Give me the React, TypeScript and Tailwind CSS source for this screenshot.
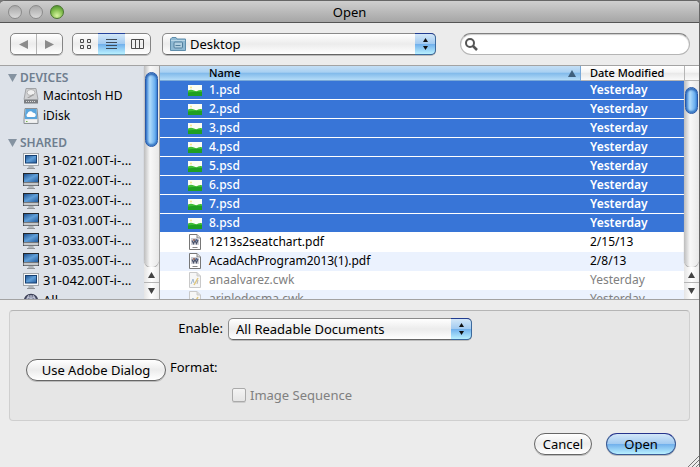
import React from "react";

const files = [
  ...["1", "2", "3", "4", "5", "6", "7", "8"].map((n) => ({
    name: `${n}.psd`,
    date: "Yesterday",
    kind: "psd",
  })),
  { name: "1213s2seatchart.pdf", date: "2/15/13", kind: "pdf" },
  { name: "AcadAchProgram2013(1).pdf", date: "2/8/13", kind: "pdf" },
  { name: "anaalvarez.cwk", date: "Yesterday", kind: "cwk" },
  { name: "arinledesma.cwk", date: "Yesterday", kind: "cwk" },
];

const shared = [
  { name: "31-021.00T-i-...", dark: false },
  { name: "31-022.00T-i-...", dark: true },
  { name: "31-023.00T-i-...", dark: true },
  { name: "31-031.00T-i-...", dark: true },
  { name: "31-033.00T-i-...", dark: true },
  { name: "31-035.00T-i-...", dark: true },
  { name: "31-042.00T-i-...", dark: false },
];

function PictureIcon() {
  return (
    <svg width="14" height="11" viewBox="0 0 14 11" className="block">
      <rect width="14" height="11" fill="#fbfdf4" />
      <circle cx="3" cy="2.5" r="1" fill="#f3e58a" />
      <path d="M0 5.5Q3 4 6 5.5T10 5.500Q12 4.500 14 5.200V11H0Z" fill="#3fbe35" />
      <path d="M0 7.500Q7 6.500 14 7V11H0Z" fill="#1f9f22" />
    </svg>
  );
}

function DocumentIcon({ faded }: { faded: boolean }) {
  return (
    <svg width="14" height="16" viewBox="0 0 14 16" className="block">
      <path
        d="M1.500.5H9L12.500 4V15.500H1.500Z"
        fill={faded ? "#f6f6f6" : "#fff"}
        stroke={faded ? "#c9c9c9" : "#777"}
      />
      <path d="M9 .5V4h3.500" fill="#ddd" stroke={faded ? "#ccc" : "#888"} />
      {faded ? (
        <g fill="none">
          <path d="M3 12L5 7l1 4" stroke="#9fb7d0" />
          <path d="M6 13l4-7" stroke="#dfc67b" strokeWidth="1.500" />
          <path d="M9 12l1-4" stroke="#b5b5b5" />
        </g>
      ) : (
        <g>
          <rect x="3" y="4" width="8" height="7" fill="#cfd0d6" />
          <path d="M4 6.500l1.500 3 1.500-3 1.500 3 1.500-3.500" stroke="#4b546c" strokeWidth="1.300" fill="none" />
          <circle cx="6" cy="6" r="1" fill="#9b6352" />
          <circle cx="8.500" cy="6" r="1" fill="#4a6390" />
          <path d="M4.500 13.500h5" stroke="#888" />
        </g>
      )}
    </svg>
  );
}

function ComputerIcon({ dark }: { dark: boolean }) {
  return (
    <svg width="16" height="16" viewBox="0 0 16 16" className="block">
      <defs>
        <linearGradient id="screen" x1="0" y1="0" x2="1" y2="1">
          <stop offset="0" stopColor="#1c4f8e" />
          <stop offset=".5" stopColor="#5f9fd9" />
          <stop offset="1" stopColor="#245b9c" />
        </linearGradient>
      </defs>
      <path d="M6 12h4l1 3H5z" fill="#aeb3b8" />
      <path d="M4 15.500h8" stroke="#909498" />
      {dark ? (
        <g>
          <rect x="0" y="0" width="16" height="13" fill="#23262b" />
          <rect x="1" y="1" width="14" height="8" fill="url(#screen)" />
          <rect x="0.500" y="9.500" width="15" height="3" fill="#c5c8cb" />
        </g>
      ) : (
        <g>
          <rect x="0.500" y="0.500" width="15" height="12" fill="#f7f8f9" stroke="#a2a6aa" />
          <rect x="2.500" y="2.500" width="11" height="7.500" fill="url(#screen)" stroke="#173f70" />
        </g>
      )}
    </svg>
  );
}

function HardDiskIcon() {
  return (
    <svg width="16" height="16" viewBox="0 0 16 16" className="block">
      <path d="M3 .5h10l2 11H1z" fill="#d0d1d3" stroke="#a2a4a7" />
      <ellipse cx="8" cy="4.500" rx="4" ry="3" fill="#f0f0f0" stroke="#b5b5b5" />
      <path d="M4 10l6-4 1 1-5 3z" fill="#a0a0a0" />
      <rect x="1" y="12" width="14" height="3.500" fill="#7b7e82" />
      <path d="M3 13.500h10" stroke="#dadada" strokeDasharray="1 1" />
    </svg>
  );
}

function IDiskIcon() {
  return (
    <svg width="16" height="16" viewBox="0 0 16 16" className="block">
      <path d="M2 .5h12l1 11v4H1v-4z" fill="#e3e5e7" stroke="#8b9095" />
      <path d="M2.500 1h11l.7 10H1.800z" fill="#5aa6de" />
      <path d="M4.500 9a2 2 0 010-3.500 3 3 0 015.500-.8A2.300 2.300 0 0111.500 9z" fill="#fff" />
      <path d="M2 12h12v2.500H2z" fill="#f2f2f2" />
      <path d="M3 13.500h1.500" stroke="#74b84a" />
    </svg>
  );
}

function GlobeIcon() {
  return (
    <svg width="16" height="16" viewBox="0 0 16 16" className="block">
      <circle cx="8" cy="8" r="6.500" fill="#7c829c" stroke="#3c4057" strokeWidth="1.500" />
      <path d="M8 2v12M2 8h12M4 4q4 3 8 0M5 13Q2 8 6 2M11 13q3-5-1-11" fill="none" stroke="#c0c4d4" />
    </svg>
  );
}

function FolderIcon() {
  return (
    <svg width="16" height="14" viewBox="0 0 16 14" className="block">
      <path d="M.5 13.500V2L2 .5h4L7 2h8.500v11.500z" fill="#8fb9d3" stroke="#5f8eac" />
      <path d="M1 3.500h14" stroke="#b9d6e6" />
      <rect x="4" y="5" width="8.500" height="6" rx="1" fill="#b2d0e1" stroke="#527f9d" />
      <path d="M5.500 8.500h5" stroke="#527f9d" />
    </svg>
  );
}

function Triangle({ up = false }: { up?: boolean }) {
  return (
    <svg width="7" height="6" viewBox="0 0 7 6" className="block">
      <path d={up ? "M3.500 0L7 6H0z" : "M0 0H7L3.500 6z"} fill="#444" />
    </svg>
  );
}

function Scrollbar({ size }: { size: "large" | "small" }) {
  return (
    <div className="flex min-h-0 flex-1 flex-col">
      <div className="flex-1 overflow-hidden rounded-b-lg bg-linear-to-r from-[#bdbdbd] via-[#f8f8f8] via-40% to-[#e8e8e8] px-px pt-[6px] shadow-[0_1px_1px_#999]">
        <div
          className={`${size === "large" ? "h-[75px]" : "h-[27px]"} rounded-full border border-[#2858a8] bg-linear-to-r from-[#3c82d6] via-[#b0dcfb] via-35% to-[#4b9cea] shadow-[inset_0_2px_2px_#2f68b5,inset_0_-2px_2px_#3979c4]`}
        />
      </div>
      <button
        type="button"
        aria-label="Scroll up"
        className="flex h-4 items-center justify-center border-b border-[#b5b5b5] bg-linear-to-r from-[#e5e5e5] via-white to-[#ececec]"
      >
        <Triangle up />
      </button>
      <button
        type="button"
        aria-label="Scroll down"
        className="flex h-4 items-center justify-center bg-linear-to-r from-[#e5e5e5] via-white to-[#ececec]"
      >
        <Triangle />
      </button>
    </div>
  );
}

const glossy = "bg-linear-to-b from-white via-[#ececec] via-50% to-white";
const blueGlossy =
  "bg-[linear-gradient(#d3e7f8,#a3cbf1_48%,#72b1ec_52%,#b9f0ff)]";

function PopUp({
  id,
  label,
  value,
  width,
  icon,
}: {
  id: string;
  label?: string;
  value: string;
  width: string;
  icon?: React.ReactNode;
}) {
  return (
    <div className={`relative h-[22px] ${width}`}>
      <select
        id={id}
        aria-label={label}
        className={`block h-[22px] w-full appearance-none rounded-[5px] border border-[#8a8a8a] border-b-[#666] text-[13px] leading-5 text-black shadow-[0_1px_0_#bbb] ${glossy} ${icon ? "pl-[27px]" : "pl-[7px]"}`}
      >
        <option>{value}</option>
      </select>
      {icon && <span className="pointer-events-none absolute top-1 left-2">{icon}</span>}
      <span
        className={`pointer-events-none absolute inset-y-0 right-0 flex w-[21px] items-center justify-center rounded-r-[5px] border border-l-0 border-[#3c6a9e] border-t-[#223c90] ${blueGlossy}`}
      >
        <svg width="5" height="12" viewBox="0 0 5 12">
          <path d="M2.500 0L5 4H0zM0 8H5L2.500 12z" fill="#111" />
        </svg>
      </span>
    </div>
  );
}

function SidebarHeading({ children }: { children: string }) {
  return (
    <h2 className="flex h-4 items-center gap-[3px] pl-2 text-[12px] font-semibold text-[#6f7e8f]">
      <svg width="9" height="8" viewBox="0 0 9 8">
        <path d="M0 0H9L4.500 8z" fill="#8593a1" />
      </svg>
      {children}
    </h2>
  );
}

function SidebarItem({ icon, children }: { icon: React.ReactNode; children: string }) {
  return (
    <li className="flex h-5 items-center gap-1 pl-[23px] whitespace-nowrap">
      {icon}
      {children}
    </li>
  );
}

export default function App() {
  return (
    <div className="bg-[#777] font-['Noto_Sans','Lucida_Grande',sans-serif] text-[13px] text-black">
      <div className="flex min-h-screen flex-col overflow-hidden rounded-t-[5px] border-t border-r border-[#666] bg-[#ececec]">
        <header className="relative flex h-[22px] items-center gap-[7px] border-b border-[#555] bg-linear-to-b from-[#cfcfcf] to-[#a6a6a6] pl-2">
          <button
            type="button"
            aria-label="Close"
            className="size-[14px] rounded-full border border-[#8a8a8a] bg-linear-to-b from-[#a8a8a8] to-[#dadada]"
          />
          <button
            type="button"
            aria-label="Minimize"
            className="size-[14px] rounded-full border border-[#8a8a8a] bg-linear-to-b from-[#a8a8a8] to-[#dadada]"
          />
          <button
            type="button"
            aria-label="Zoom"
            className="size-[14px] rounded-full border border-[#4b7530] bg-[radial-gradient(circle_at_50%_80%,#d8f5a0,#7fbb4b_55%,#3f8326)]"
          />
          <h1 className="pointer-events-none absolute inset-x-0 text-center text-[13px] leading-5">Open</h1>
        </header>

        <div className="flex h-[43px] items-center border-b border-[#a3a3a3] px-[10px] pr-[9px]">
          <div className={`flex h-[22px] w-[53px] shrink-0 rounded-[5px] border border-[#858585] shadow-[0_1px_0_#bbb] ${glossy}`}>
            <button type="button" aria-label="Back" className="flex flex-1 items-center justify-center border-r border-[#b5b5b5]">
              <svg width="9" height="9" viewBox="0 0 9 9">
                <path d="M9 0V9L0 4.500z" fill="#8b8b8b" />
              </svg>
            </button>
            <button type="button" aria-label="Forward" className="flex flex-1 items-center justify-center">
              <svg width="9" height="9" viewBox="0 0 9 9">
                <path d="M0 0V9L9 4.500z" fill="#8b8b8b" />
              </svg>
            </button>
          </div>

          <div className={`ml-[9px] flex h-[22px] w-[79px] shrink-0 rounded-[5px] border border-[#858585] shadow-[0_1px_0_#bbb] ${glossy}`}>
            <button type="button" aria-label="Icon view" className="flex flex-1 items-center justify-center">
              <svg width="12" height="11" viewBox="0 0 12 11" fill="none" stroke="#4c4c4c">
                <path d="M.5.5h3v3h-3zM7.500.5h3v3h-3zM.5 6.500h3v3h-3zM7.500 6.500h3v3h-3z" />
              </svg>
            </button>
            <button
              type="button"
              aria-label="List view"
              className={`-my-px flex w-[27px] items-center justify-center border-y border-t-[#26439b] border-b-[#6a9cb5] ${blueGlossy}`}
            >
              <svg width="11" height="11" viewBox="0 0 11 11" stroke="#3f4b58">
                <path d="M0 .5h11M0 3.500h11M0 6.500h11M0 9.500h11" />
              </svg>
            </button>
            <button type="button" aria-label="Column view" className="flex flex-1 items-center justify-center">
              <svg width="13" height="11" viewBox="0 0 13 11" fill="none" stroke="#4c4c4c">
                <path d="M.5.5h12v9H.5zM4.500.5v9M8.500.5v9" />
              </svg>
            </button>
          </div>

          <div className="ml-[11px]">
            <PopUp id="folder" label="Folder" value="Desktop" width="w-[274px]" icon={<FolderIcon />} />
          </div>

          <label className="ml-6 flex h-[22px] min-w-0 flex-1 items-center rounded-full border border-[#b5b5b5] border-t-[#808080] bg-white pl-1 shadow-[inset_0_1px_1px_#ccc]">
            <svg width="13" height="13" viewBox="0 0 13 13" fill="none" stroke="#555">
              <circle cx="5" cy="5" r="4" strokeWidth="2" />
              <path d="M8 8l4 4" strokeWidth="2.500" />
            </svg>
            <input type="search" aria-label="Search" className="min-w-0 flex-1 bg-transparent px-1 outline-none" />
          </label>
        </div>

        <main className="flex h-[234px] border-b border-[#a3a3a3]">
          <nav aria-label="Places" className="w-36 shrink-0 overflow-hidden bg-[#dde2e9] pt-1">
            <SidebarHeading>DEVICES</SidebarHeading>
            <ul className="mb-[9px] text-[12px]">
              <SidebarItem icon={<HardDiskIcon />}>Macintosh HD</SidebarItem>
              <SidebarItem icon={<IDiskIcon />}>iDisk</SidebarItem>
            </ul>
            <SidebarHeading>SHARED</SidebarHeading>
            <ul className="text-[13px]">
              {shared.map((item) => (
                <SidebarItem key={item.name} icon={<ComputerIcon dark={item.dark} />}>
                  {item.name}
                </SidebarItem>
              ))}
              <SidebarItem icon={<GlobeIcon />}>All...</SidebarItem>
            </ul>
          </nav>
          <div className="flex w-4 shrink-0 flex-col border-r border-[#a3a3a3]">
            <Scrollbar size="large" />
          </div>

          <div className="min-w-0 flex-1 overflow-hidden bg-white">
            <table className="w-full table-fixed border-separate border-spacing-0">
              <colgroup>
                <col />
                <col className="w-[103px]" />
              </colgroup>
              <thead>
                <tr className="text-left text-[11px] leading-[14px]">
                  <th className="h-[15px] border-r border-b border-[#79a9d8] bg-[linear-gradient(#c3def5,#a9d0f2_45%,#80b9ea_50%,#b5dcf8)] p-0 pr-1 pl-[49px] font-medium">
                    <span className="flex items-center justify-between">
                      Name
                      <svg width="8" height="7" viewBox="0 0 8 7">
                        <path d="M4 0L8 7H0z" fill="#3e5f7d" />
                      </svg>
                    </span>
                  </th>
                  <th className="h-[15px] border-b border-[#b5b5b5] bg-[linear-gradient(#fff,#f5f5f5_45%,#e8e8e8_50%,#fafafa)] p-0 pl-[9px] font-medium">
                    Date Modified
                  </th>
                </tr>
              </thead>
              <tbody>
                {files.map((file, i) => {
                  const selected = file.kind === "psd";
                  const tone = selected
                    ? "bg-[#3875d7] text-white border-white"
                    : file.kind === "cwk"
                      ? "text-[#808080] border-transparent"
                      : "text-black border-transparent";
                  const stripe = !selected && i % 2 === 1 ? "bg-[#ebf2fe]" : "";
                  return (
                    <tr key={file.name} className="text-[12px] leading-[18px]">
                      <td className={`h-[19px] border-b p-0 pl-7 ${tone} ${stripe} ${selected ? "font-medium" : ""}`}>
                        <span className="flex h-[18px] items-center gap-[7px]">
                          {selected ? <PictureIcon /> : <DocumentIcon faded={file.kind === "cwk"} />}
                          {file.name}
                        </span>
                      </td>
                      <td className={`h-[19px] border-b p-0 pl-[9px] ${tone} ${stripe} ${selected ? "font-semibold" : ""}`}>
                        {file.date}
                      </td>
                    </tr>
                  );
                })}
              </tbody>
            </table>
          </div>
          <div className="flex w-[15px] shrink-0 flex-col">
            <div className="h-[15px] border-b border-l border-[#b5b5b5] bg-[linear-gradient(#fff,#f5f5f5_45%,#e8e8e8_50%,#fafafa)]" />
            <Scrollbar size="small" />
          </div>
        </main>

        <section className="mx-[9px] mt-[10px] flex h-[111px] items-start rounded-[4px] border border-[#cfcfcf] border-t-[#b5b5b5] bg-[#e6e6e6]">
          <button
            type="button"
            className={`mt-12 ml-4 h-[22px] w-[140px] shrink-0 rounded-full border border-[#666] text-[13px] leading-5 shadow-[0_1px_0_#bbb] ${glossy}`}
          >
            Use Adobe Dialog
          </button>
          <div className="ml-1 grid grid-cols-[53px_auto] gap-x-[5px] pt-[7px]">
            <label htmlFor="enable" className="h-[39px] text-right leading-5">
              Enable:
            </label>
            <PopUp id="enable" value="All Readable Documents" width="w-[244px]" />
            <span className="h-7 leading-5">Format:</span>
            <span />
            <span />
            <label className="flex items-center gap-1 pl-1 leading-5 text-[#808080]">
              <input
                type="checkbox"
                disabled
                className="size-[14px] appearance-none rounded-[2px] border border-[#aaa] bg-linear-to-b from-[#f4f4f4] to-[#e5e5e5] shadow-[0_1px_0_#ccc]"
              />
              Image Sequence
            </label>
          </div>
        </section>

        <footer className="relative flex flex-1 items-start justify-end gap-[14px] pt-3 pr-[23px]">
          <button
            type="button"
            className={`h-[22px] w-[58px] rounded-full border border-[#666] text-[13px] leading-5 shadow-[0_1px_0_#bbb] ${glossy}`}
          >
            Cancel
          </button>
          <button
            type="button"
            className={`h-[22px] w-[70px] rounded-full border border-[#3a5a94] border-t-[#26348c] text-[13px] leading-5 shadow-[0_1px_0_#bbb] ${blueGlossy}`}
          >
            Open
          </button>
          <svg width="11" height="11" viewBox="0 0 11 11" className="absolute right-0 bottom-0" stroke="#777">
            <path d="M0 11L11 0M4 11l7-7M8 11l3-3" />
          </svg>
        </footer>
      </div>
    </div>
  );
}
